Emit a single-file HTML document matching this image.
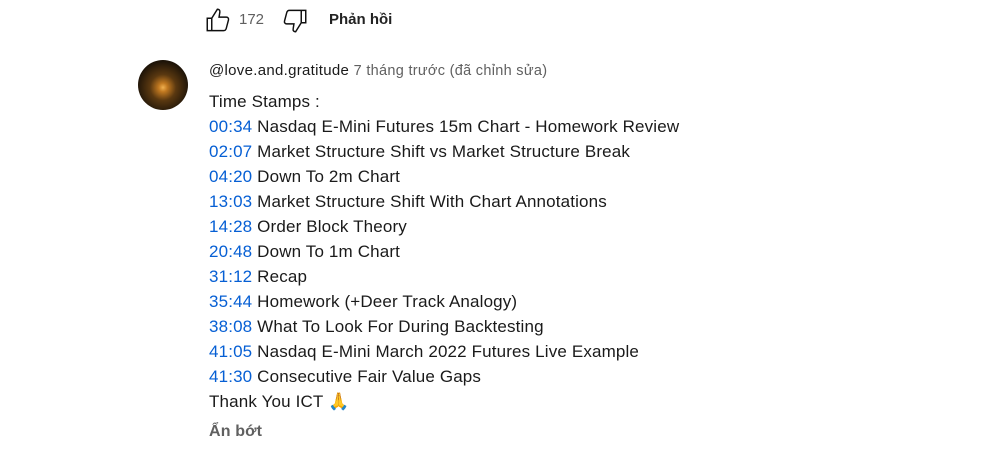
<!DOCTYPE html>
<html><head><meta charset="utf-8"><style>
body{margin:0;width:983px;height:454px;background:#fff;font-family:"Liberation Sans","DejaVu Sans",sans-serif;position:relative;overflow:hidden;color:#0f0f0f}
.a{position:absolute}
.ln{position:absolute;left:209px;font-size:17px;letter-spacing:0.15px;line-height:25px;white-space:nowrap;color:#1a1a1a}
.t{color:#065fd4}
</style></head><body>
<svg class="a" style="left:205px;top:7px" width="27" height="27" viewBox="0 0 24 24" fill="none" stroke="#0f0f0f" stroke-width="1.3"><path d="M2 10h4v11H2zM6 10l5-8c1.5 0 2.5 1 2.2 2.6L12.5 9H19c1.3 0 2.2 1.2 1.9 2.4l-2 7.6c-.3 1.2-1.2 2-2.4 2H6"/></svg>
<div class="a" style="left:239px;top:11px;font-size:15px;color:#606060">172</div>
<svg class="a" style="left:281px;top:7px" width="27" height="27" viewBox="0 0 24 24" fill="none" stroke="#0f0f0f" stroke-width="1.3"><path d="M22 14h-4V3h4zM18 14l-5 8c-1.5 0-2.5-1-2.2-2.6L11.5 15H5c-1.3 0-2.2-1.2-1.9-2.4l2-7.6C5.4 3.8 6.3 3 7.5 3H18"/></svg>
<div class="a" style="left:329px;top:11px;font-size:15px;font-weight:bold;color:#222">Phản hồi</div>
<div class="a" style="left:138px;top:60px;width:50px;height:50px;border-radius:50%;background:radial-gradient(circle at 50% 55%,#f0b050 0,#c07820 12%,#5a3810 35%,#1e1408 70%,#120c04 100%)"></div>
<div class="a" style="left:209px;top:62px;font-size:15px;letter-spacing:0.3px;white-space:nowrap"><span style="color:#1a1a1a">@love.and.gratitude</span> <span style="color:#606060;font-size:14.5px">7 tháng trước (đã chỉnh sửa)</span></div>
<div class="ln" style="top:89px">Time Stamps :</div>
<div class="ln" style="top:114px"><span class="t">00:34</span> Nasdaq E-Mini Futures 15m Chart - Homework Review</div>
<div class="ln" style="top:139px"><span class="t">02:07</span> Market Structure Shift vs Market Structure Break</div>
<div class="ln" style="top:164px"><span class="t">04:20</span> Down To 2m Chart</div>
<div class="ln" style="top:189px"><span class="t">13:03</span> Market Structure Shift With Chart Annotations</div>
<div class="ln" style="top:214px"><span class="t">14:28</span> Order Block Theory</div>
<div class="ln" style="top:239px"><span class="t">20:48</span> Down To 1m Chart</div>
<div class="ln" style="top:264px"><span class="t">31:12</span> Recap</div>
<div class="ln" style="top:289px"><span class="t">35:44</span> Homework (+Deer Track Analogy)</div>
<div class="ln" style="top:314px"><span class="t">38:08</span> What To Look For During Backtesting</div>
<div class="ln" style="top:339px"><span class="t">41:05</span> Nasdaq E-Mini March 2022 Futures Live Example</div>
<div class="ln" style="top:364px"><span class="t">41:30</span> Consecutive Fair Value Gaps</div>
<div class="ln" style="top:389px">Thank You ICT <span style="font-size:17px">🙏</span></div>
<div class="ln" style="top:419px;font-size:16px;font-weight:bold;color:#606060">Ẩn bớt</div>
</body></html>
